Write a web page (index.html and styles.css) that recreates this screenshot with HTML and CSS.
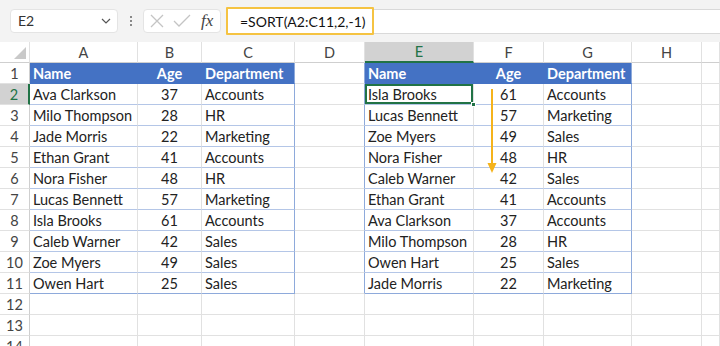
FILE: index.html
```html
<!DOCTYPE html>
<html lang="en">
<head>
  <meta charset="UTF-8">
  <title>SORT by Age</title>
  <link rel="stylesheet" href="styles.css">
</head>
<body>
  <div class="topbar">
    <div class="namebox">
      <span>E2</span>
      <svg class="chev" width="10" height="6" viewBox="0 0 10 6"><path d="M1 1l4 4 4-4" fill="none" stroke="#555" stroke-width="1.2"/></svg>
    </div>
    <div class="dots"><i></i><i></i><i></i></div>
    <div class="fxbox">
      <svg width="16" height="16" viewBox="0 0 16 16"><path d="M2 2l12 12M14 2L2 14" stroke="#c4c4c4" stroke-width="1.3"/></svg>
      <svg width="18" height="16" viewBox="0 0 18 16"><path d="M1 8l5 5L17 2" fill="none" stroke="#c4c4c4" stroke-width="1.3"/></svg>
      <span class="fx">fx</span>
    </div>
    <div class="formula">
      <span class="formula-text">=SORT(A2:C11,2,-1)</span>
    </div>
  </div>

  <div class="sheet">
    <table class="grid">
      <colgroup>
        <col style="width:30px"><col style="width:108px"><col style="width:64px"><col style="width:93px">
        <col style="width:70px"><col style="width:109px"><col style="width:70px"><col style="width:88px">
        <col style="width:70px"><col style="width:18px">
      </colgroup>
      <tr class="colhead">
        <td class="corner"><span class="tri"></span></td>
        <td>A</td><td>B</td><td class="edge">C</td><td class="edge">D</td>
        <td class="sel-col">E</td><td>F</td><td class="edge">G</td><td>H</td><td></td>
      </tr>
      <tr>
        <td class="rh edge">1</td>
        <td class="th">Name</td><td class="th c">Age</td><td class="th edge">Department</td>
        <td class="edge"></td>
        <td class="th">Name</td><td class="th c">Age</td><td class="th edge">Department</td>
        <td></td><td></td>
      </tr>
      <tr>
        <td class="rh sel-row">2</td>
        <td class="tb">Ava Clarkson</td><td class="tb c">37</td><td class="tb edge">Accounts</td>
        <td class="edge"></td>
        <td class="tb sel-cell">Isla Brooks<span class="handle"></span></td><td class="tb c">61</td><td class="tb edge">Accounts</td>
        <td></td><td></td>
      </tr>
      <tr>
        <td class="rh edge">3</td>
        <td class="tb">Milo Thompson</td><td class="tb c">28</td><td class="tb edge">HR</td>
        <td class="edge"></td>
        <td class="tb">Lucas Bennett</td><td class="tb c">57</td><td class="tb edge">Marketing</td>
        <td></td><td></td>
      </tr>
      <tr>
        <td class="rh edge">4</td>
        <td class="tb">Jade Morris</td><td class="tb c">22</td><td class="tb edge">Marketing</td>
        <td class="edge"></td>
        <td class="tb">Zoe Myers</td><td class="tb c">49</td><td class="tb edge">Sales</td>
        <td></td><td></td>
      </tr>
      <tr>
        <td class="rh edge">5</td>
        <td class="tb">Ethan Grant</td><td class="tb c">41</td><td class="tb edge">Accounts</td>
        <td class="edge"></td>
        <td class="tb">Nora Fisher</td><td class="tb c">48</td><td class="tb edge">HR</td>
        <td></td><td></td>
      </tr>
      <tr>
        <td class="rh edge">6</td>
        <td class="tb">Nora Fisher</td><td class="tb c">48</td><td class="tb edge">HR</td>
        <td class="edge"></td>
        <td class="tb">Caleb Warner</td><td class="tb c">42</td><td class="tb edge">Sales</td>
        <td></td><td></td>
      </tr>
      <tr>
        <td class="rh edge">7</td>
        <td class="tb">Lucas Bennett</td><td class="tb c">57</td><td class="tb edge">Marketing</td>
        <td class="edge"></td>
        <td class="tb">Ethan Grant</td><td class="tb c">41</td><td class="tb edge">Accounts</td>
        <td></td><td></td>
      </tr>
      <tr>
        <td class="rh edge">8</td>
        <td class="tb">Isla Brooks</td><td class="tb c">61</td><td class="tb edge">Accounts</td>
        <td class="edge"></td>
        <td class="tb">Ava Clarkson</td><td class="tb c">37</td><td class="tb edge">Accounts</td>
        <td></td><td></td>
      </tr>
      <tr>
        <td class="rh edge">9</td>
        <td class="tb">Caleb Warner</td><td class="tb c">42</td><td class="tb edge">Sales</td>
        <td class="edge"></td>
        <td class="tb">Milo Thompson</td><td class="tb c">28</td><td class="tb edge">HR</td>
        <td></td><td></td>
      </tr>
      <tr>
        <td class="rh edge">10</td>
        <td class="tb">Zoe Myers</td><td class="tb c">49</td><td class="tb edge">Sales</td>
        <td class="edge"></td>
        <td class="tb">Owen Hart</td><td class="tb c">25</td><td class="tb edge">Sales</td>
        <td></td><td></td>
      </tr>
      <tr class="last">
        <td class="rh edge">11</td>
        <td class="tb">Owen Hart</td><td class="tb c">25</td><td class="tb edge">Sales</td>
        <td class="edge"></td>
        <td class="tb">Jade Morris</td><td class="tb c">22</td><td class="tb edge">Marketing</td>
        <td></td><td></td>
      </tr>
      <tr>
        <td class="rh">12</td><td></td><td></td><td></td><td></td><td></td><td></td><td></td><td></td><td></td>
      </tr>
      <tr>
        <td class="rh">13</td><td></td><td></td><td></td><td></td><td></td><td></td><td></td><td></td><td></td>
      </tr>
      <tr>
        <td class="rh">14</td><td></td><td></td><td></td><td></td><td></td><td></td><td></td><td></td><td></td>
      </tr>
    </table>

    <!-- sort direction annotation -->
    <svg class="arrow" width="12" height="86" viewBox="0 0 12 86">
      <path d="M6 0v76" stroke="#f5b31b" stroke-width="2"/>
      <path d="M1.5 74L6 84l4.5-10z" fill="#f5b31b"/>
    </svg>
  </div>
</body>
</html>
```

FILE: styles.css
```css
* {
  box-sizing: border-box;
  margin: 0;
  padding: 0;
}

body {
  width: 720px;
  height: 346px;
  overflow: hidden;
  background-color: #ffffff;
  font-family: "Lato", "Open Sans", sans-serif;
  color: #222;
}

/* formula bar */
.topbar {
  height: 42px;
  display: flex;
  align-items: center;
  padding-left: 10px;
  background-color: #f3f3f3;
}

.namebox {
  width: 108px;
  height: 24px;
  margin-top: -1px;
  display: flex;
  align-items: center;
  justify-content: space-between;
  padding: 0 6px 0 7px;
  background-color: #fff;
  border: 1px solid #e4e4e4;
  border-radius: 4px;
  font-size: 14px;
  color: #333;
}

.dots {
  width: 25px;
  display: flex;
  flex-direction: column;
  align-items: center;
  gap: 2px;
  margin-top: -1px;
}

.dots i {
  width: 2px;
  height: 2px;
  background-color: #888;
}

.fxbox {
  width: 78px;
  height: 24px;
  margin-top: -1px;
  display: flex;
  align-items: center;
  gap: 8px;
  padding-left: 5px;
  background-color: #fff;
  border: 1px solid #e4e4e4;
  border-radius: 4px;
}

.fx {
  font-family: "Liberation Serif", serif;
  font-style: italic;
  font-size: 17px;
  color: #444;
  margin-left: 2px;
}

.formula {
  flex: 1;
  height: 25px;
  margin-left: 5px;
  margin-top: 1px;
  background-color: #fff;
  border-top: 1px solid #d9d9d9;
  border-bottom: 1px solid #d9d9d9;
  display: flex;
  align-items: center;
}

.formula-text {
  width: 148px;
  height: 28px;
  margin-top: -1px;
  display: flex;
  align-items: center;
  padding-left: 12px;
  border: 2px solid #f5c342;
  border-radius: 1px;
  font-size: 14px;
  color: #111;
  background-color: #fff;
}

/* sheet */
.sheet {
  position: relative;
}

.grid {
  table-layout: fixed;
  border-collapse: separate;
  border-spacing: 0;
  width: 720px;
  font-size: 14.5px;
}

.grid tr {
  height: 21px;
}

.grid td {
  padding: 0 0 0 3px;
  line-height: 19px;
  white-space: nowrap;
  overflow: visible;
  border-right: 1px solid #e1e1e1;
  border-bottom: 1px solid #e1e1e1;
  vertical-align: middle;
}

.colhead td {
  padding: 0;
  text-align: center;
  color: #444;
  background-color: #fff;
  border-bottom-color: #cfcfcf;
  border-right-color: #e1e1e1;
}

.corner {
  position: relative;
}

.tri {
  position: absolute;
  right: 3px;
  bottom: 3px;
  width: 0;
  height: 0;
  border-left: 12px solid transparent;
  border-bottom: 12px solid #c9c9c9;
}

.colhead .sel-col {
  background-color: #d2d2d2;
  color: #217346;
  border-bottom: 2px solid #217346;
}

.rh {
  padding: 0 !important;
  text-align: center;
  color: #444;
  background-color: #fff;
  border-right-color: #cfcfcf !important;
}

.rh.sel-row {
  background-color: #d2d2d2;
  color: #217346;
  border-right: 2px solid #217346 !important;
}

.th {
  background-color: #4472c4;
  color: #fff;
  font-weight: 700;
  border-bottom-color: #4472c4 !important;
  border-right-color: #4472c4 !important;
}

.th.edge {
  border-right-color: #8eaadb !important;
}

.tb {
  border-bottom-color: #b4c6e7 !important;
}

.c {
  text-align: center;
  padding-left: 0 !important;
}

.grid td.edge {
  border-right-color: #8eaadb;
}

.colhead td.edge {
  border-right-color: #e1e1e1;
}

.last .tb {
  border-bottom-color: #8eaadb !important;
}

.sel-cell {
  position: relative;
  box-shadow: inset 0 0 0 2px #217346;
}

.handle {
  position: absolute;
  right: -3px;
  bottom: -3px;
  width: 5px;
  height: 5px;
  background-color: #217346;
  border: 1px solid #fff;
}

.arrow {
  position: absolute;
  left: 486px;
  top: 47px;
}
```
